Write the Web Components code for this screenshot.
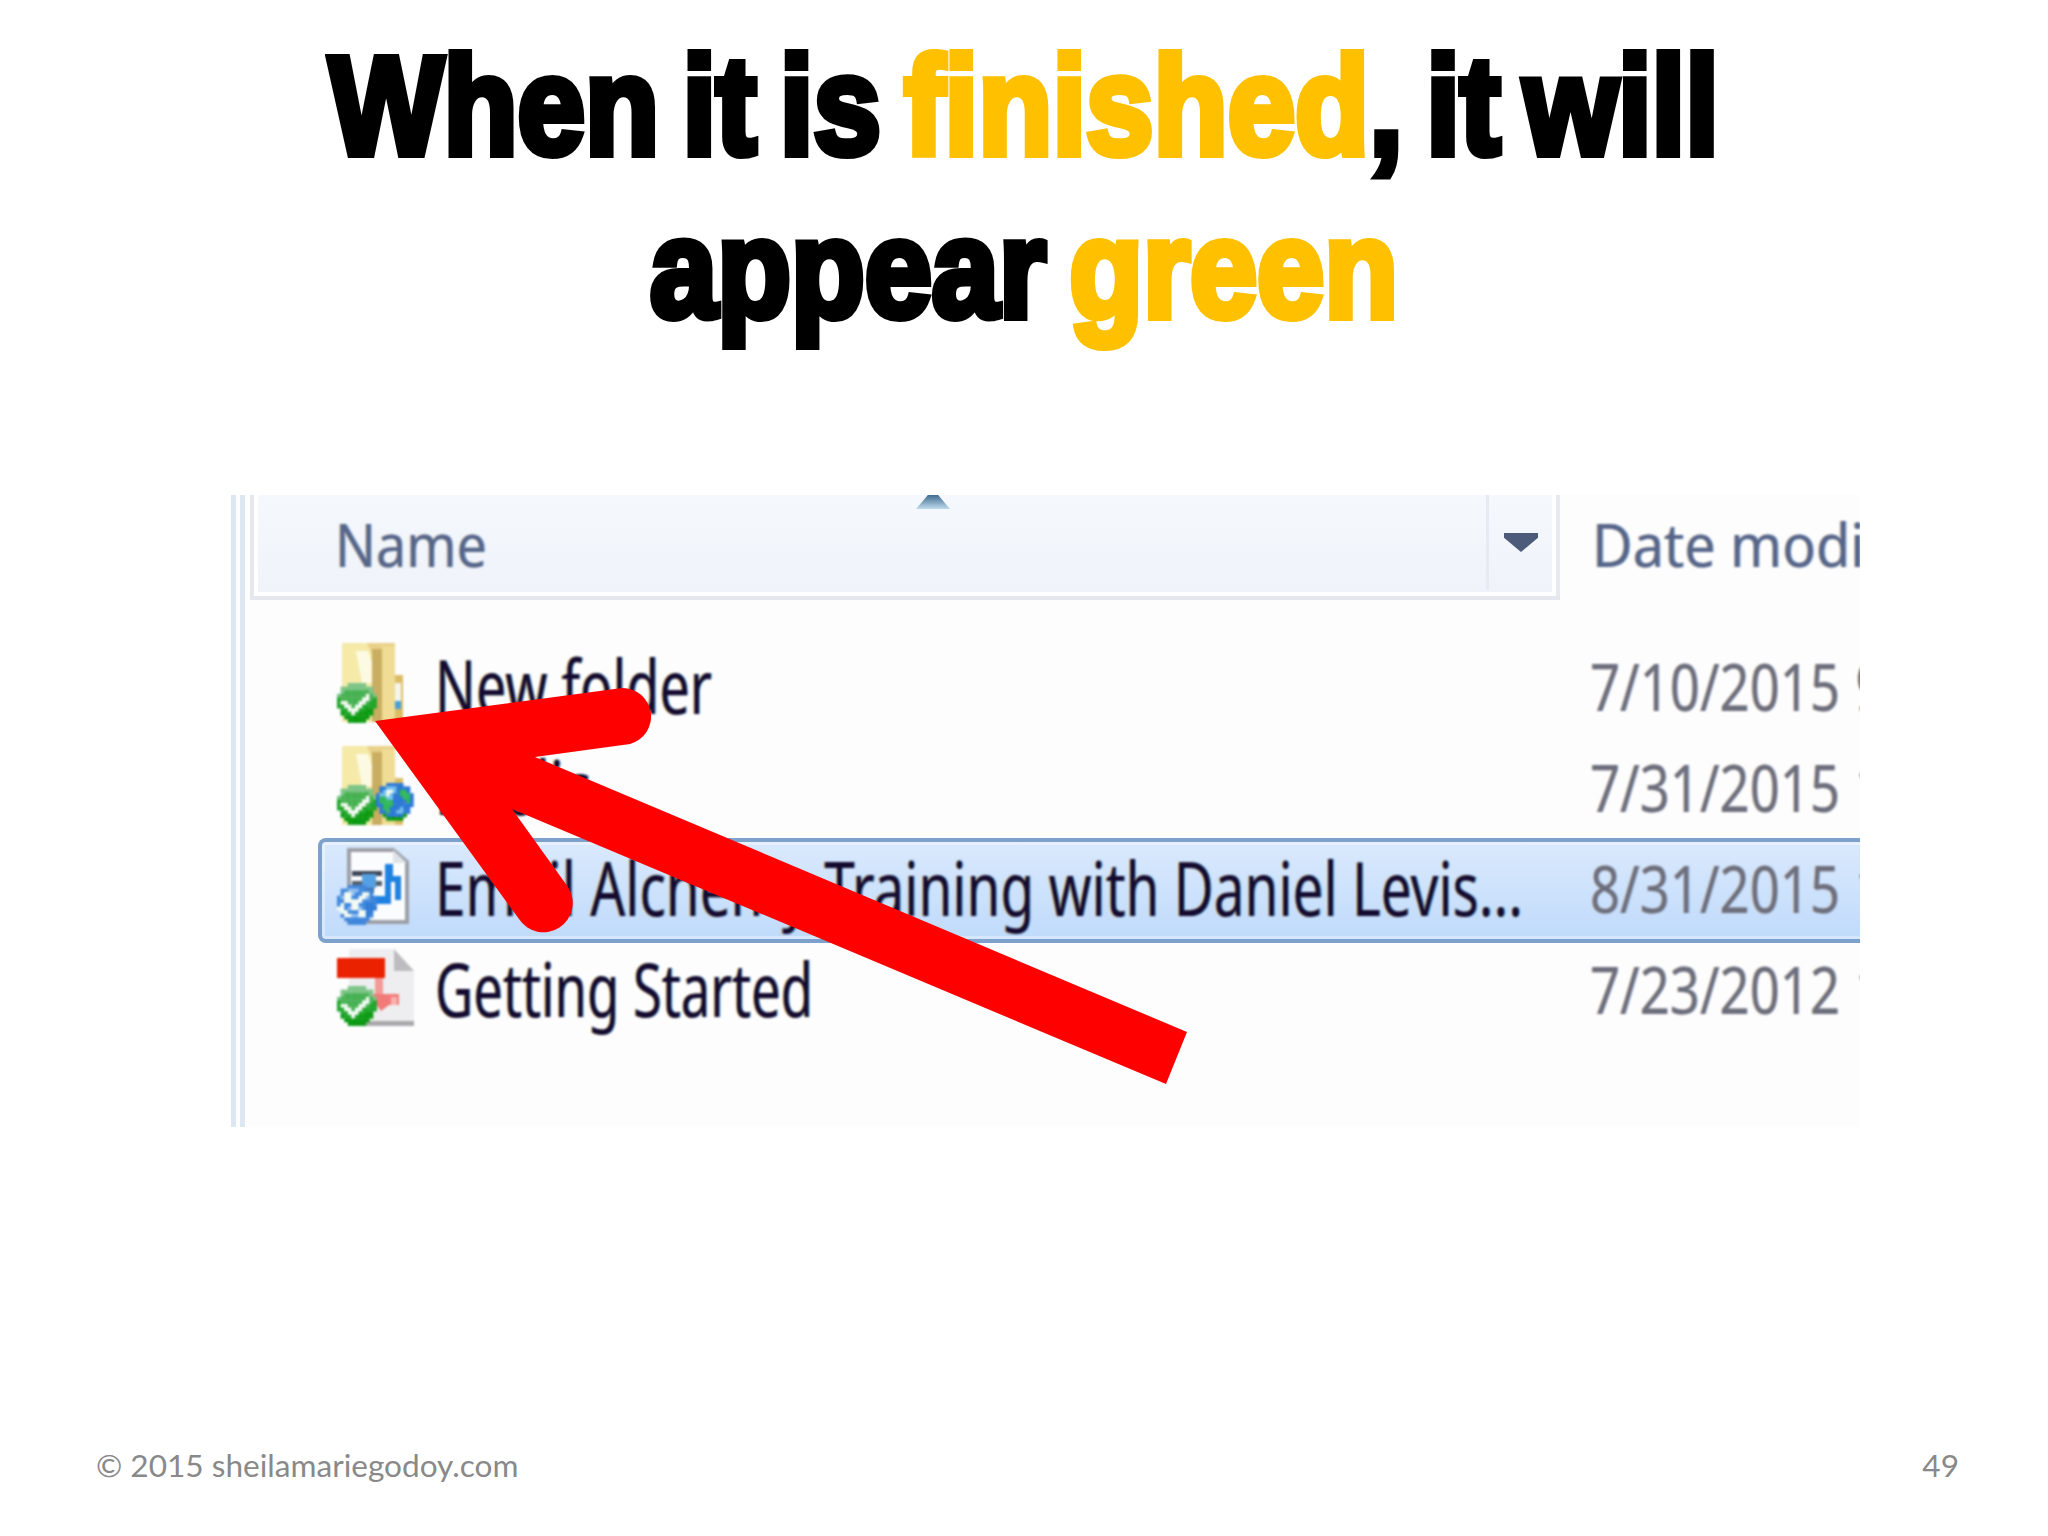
<!DOCTYPE html>
<html lang="en"><head><meta charset="utf-8"><title>Slide 49</title>
<style>html,body{margin:0;padding:0;background:#fff}</style></head>
<body>
<slide-page>
  <slide-title slot="title">
    <fit-text w="1390"><span>When it is <b>finished</b>, it will</span></fit-text>
    <fit-text w="748"><span>appear <b>green</b></span></fit-text>
  </slide-title>
  <explorer-panel slot="main">
    <column-head slot="head">
      <fit-text slot="name" w="152">Name</fit-text>
      <fit-text slot="date" w="372">Date modified</fit-text>
    </column-head>
    <file-row icon="folder"><fit-text slot="name" w="277">New folder</fit-text><fit-text slot="date" w="250">7/10/2015</fit-text><fit-text slot="time" w="24">9</fit-text></file-row>
    <file-row icon="shared"><fit-text slot="name" w="155">Public</fit-text><fit-text slot="date" w="250">7/31/2015</fit-text><fit-text slot="time" w="24">1</fit-text></file-row>
    <file-row icon="doc" selected><fit-text slot="name" w="1088">Email Alchemy Training with Daniel Levis...</fit-text><fit-text slot="date" w="250">8/31/2015</fit-text><fit-text slot="time" w="24">1</fit-text></file-row>
    <file-row icon="pdf"><fit-text slot="name" w="378">Getting Started</fit-text><fit-text slot="date" w="250">7/23/2012</fit-text><fit-text slot="time" w="24">1</fit-text></file-row>
    <red-arrow slot="overlay"></red-arrow>
  </explorer-panel>
  <slide-footer slot="footer"><span>© 2015 sheilamariegodoy.com</span><span slot="num">49</span></slide-footer>
</slide-page>
<script>
const sh=(el,html)=>{el.attachShadow({mode:'open'}).innerHTML=html};
customElements.define('slide-page',class extends HTMLElement{connectedCallback(){sh(this,`<style>
:host{display:flex;flex-direction:column;width:2048px;height:1536px;background:#fff;overflow:hidden}
.main{margin:0 188px 0 231px}
.foot{margin-top:auto}
</style><slot name="title"></slot><div class="main"><slot name="main"></slot></div><div class="foot"><slot name="footer"></slot></div>`)}});
customElements.define('slide-title',class extends HTMLElement{connectedCallback(){sh(this,`<style>
:host{display:flex;flex-direction:column;align-items:center;height:495px;box-sizing:border-box;padding-top:24px;
font:700 140px/163px "Liberation Sans",Arimo,sans-serif;color:#000;-webkit-text-stroke:8px currentColor;word-spacing:-12px}
::slotted(fit-text){display:block}
</style><slot></slot>`);
const s=document.createElement('style');s.textContent='slide-title b{color:#ffc000;font-weight:inherit}';document.head.append(s)}});
customElements.define('explorer-panel',class extends HTMLElement{connectedCallback(){sh(this,`<style>
:host{display:flex;position:relative;height:632px;background:#fdfdfe;overflow:hidden}
.rail{flex:none;width:19px;box-sizing:border-box;display:flex;gap:4px;filter:blur(.6px)}
.rail i{display:block;width:5px;background:#dde7f2}
.body{flex:1;min-width:0;display:flex;flex-direction:column}
.list{padding-top:36px;display:flex;flex-direction:column}
</style><div class="rail"><i></i><i></i></div><div class="body"><slot name="head"></slot><div class="list"><slot></slot></div></div><slot name="overlay"></slot>`)}});
customElements.define('column-head',class extends HTMLElement{connectedCallback(){sh(this,`<style>
:host{display:flex;height:105px;font:60px/60px "Noto Sans",sans-serif;color:#56658a;flex:none}
.box{position:relative;flex:none;width:1310px;box-sizing:border-box;padding:19px 0 0 85px;
background:linear-gradient(#f5f8fd,#eff3f9);box-shadow:inset 0 -4px 0 #e5e7ee,inset -4px 0 0 #e7e9f0,inset 4px 0 0 #e5e7ee,inset 0 -8px 0 #fff,inset -8px 0 0 #fff,inset 8px 0 0 #fff;}
.sep{position:absolute;left:1236px;top:0;bottom:10px;width:3px;background:#e6eaf2}
.tri{position:absolute;left:1254px;top:38px;width:34px;height:19px;background:#4c5b7a;clip-path:polygon(0 0,100% 0,100% 25%,50% 100%,0 25%)}
.sort{position:absolute;left:666px;top:0;width:34px;height:14px;background:linear-gradient(#3f6c8e,#bfdbee);clip-path:polygon(35% 0,65% 0,100% 100%,0 100%)}
.date{padding:19px 0 0 32px;white-space:nowrap}
::slotted(*){text-shadow:-1px 0 rgba(230,160,70,.5),1px 0 rgba(60,150,240,.5);filter:blur(.9px)}
</style><div class="box"><slot name="name"></slot><i class="sort"></i><i class="sep"></i><i class="tri"></i></div><div class="date"><slot name="date"></slot></div>`)}});
const BADGE=["...lllll...",".lllllllll.",".lmmmmmmml.","lmmmmmmmWml","gmmmmmmWWmg","gWWmmmWWmgg","ggWWmWWgggg",".ggWWWggdd.",".dggWgdddd.","..ddddddd..","...ddddd..."];
const GLOBE=["...bbbbb...",".bbcccbbbb.",".bcWWcbnnb.","bccWcbbnnnb","bnnccbbbnnb","bnnnnbbbbnb","bbnnnbbbbbb",".bnnbbbcbb.",".bbnbbccbb.","..dbbbbbd..","...ddddd..."];
const DGLOBE=["...kkkkk...",".kkzzzkkkk.",".kWWzkkWWk.","kzWWkkWWzkk","kkWWWWWkkkk","kWkkWWkkbbk","WWkzWWzkbbb",".WWkkkWWbb.",".kWWzzWWbk.","..kkkkkkk..","...kkkkk..."];
const PAL={l:'#7cc487',m:'#45b152',g:'#1fa62a',d:'#0a9a12',W:'#f4fbf4',b:'#2a78d8',c:'#6fc0ee',n:'#2cb85a',k:'#3f87dc',z:'#8fbdf0'};
const px=(rows,x,y,s)=>rows.map((r,j)=>[...r].map((c,i)=>PAL[c]?`<rect x="${(x+i*s).toFixed(1)}" y="${(y+j*s).toFixed(1)}" width="${s+.3}" height="${s+.3}" fill="${PAL[c]}"/>`:'').join('')).join('');
const FOLDER=(y)=>`<path d="M7 ${y}H60V${y+32}H68V${y+79}H7Z" fill="#ead189"/><path d="M7 ${y}H32L38 ${y+14}V${y+79}H7Z" fill="#f5eaa8"/><path d="M21 ${y+8}H33L37 ${y+20}V${y+40}H27Z" fill="#fdfae4"/><path d="M37 ${y+6}H47V${y+79}H37Z" fill="#c9ad60"/><path d="M47 ${y+3}H60V${y+79}H47Z" fill="#f0dc94"/><path d="M60 ${y+32}H68V${y+79}H60Z" fill="#dcbd66"/>`;
const ICONS={
folder:FOLDER(7)+`<rect x="60" y="47" width="6" height="18" fill="#f4f6ee"/><rect x="60" y="65" width="6" height="8" fill="#4aa0d8"/>`+px(BADGE,2,47,3.6),
shared:FOLDER(9)+px(BADGE,2,48,3.6)+px(GLOBE,41,46,3.4),
doc:`<path d="M14 12H58L72 24V84H14Z" fill="#fbfcfe" stroke="#9c9fa6" stroke-width="4"/><path d="M58 12V25H72" fill="#dfe3e8"/><rect x="17" y="33" width="30" height="5" fill="#404858"/><rect x="17" y="43" width="30" height="5" fill="#55606e"/><rect x="27" y="36" width="14" height="14" fill="#55a0e4"/><rect x="29" y="50" width="10" height="5" fill="#3c4a5a"/><path d="M50 26H58V38H66V62H60V44H56V66H36V58H50Z" fill="#1f82e2"/>`+px(DGLOBE,2,47,3.6),
pdf:`<path d="M14 10H59L79 32V86H14Z" fill="#eeeef0"/><path d="M59 10L79 32H59Z" fill="#bdbdbf"/><rect x="14" y="82" width="65" height="5" fill="#a9a9ab"/><rect x="2" y="19" width="48" height="20" fill="#ea2200"/><rect x="40" y="39" width="8" height="18" fill="#f39a96"/><path d="M38 55H64V66H54L46 72L40 64Z" fill="#f27a78"/><rect x="56" y="58" width="6" height="8" fill="#f9b2ae"/>`+px(BADGE,2,47,3.6)};
customElements.define('file-row',class extends HTMLElement{connectedCallback(){const sel=this.hasAttribute('selected');sh(this,`<style>
:host{display:block;height:${sel?105:101}px;margin:0 -10px ${sel?-4:0}px 68px;flex:none}
.r{box-sizing:border-box;height:100%;display:grid;grid-template-columns:100px 1155px 1fr;padding-left:17px;position:relative;
font:74px/74px "Noto Sans",sans-serif;color:#140a30;
${sel?'background:linear-gradient(#dbeafd,#bfdafb);border-radius:8px 0 0 8px;box-shadow:inset 0 0 0 4px #7da1cb,inset 0 0 0 7px rgba(255,255,255,.35);':''}}
svg{display:block;width:90px;height:90px;filter:blur(1.3px)}
.n,.d{padding-top:13px;filter:blur(.9px)}
.n{text-shadow:-1.5px 0 rgba(245,190,70,.75),1.5px 0 rgba(50,170,245,.75)}
.d{color:#6d6e7c;font-size:65px;display:flex;gap:16px;text-shadow:-1px 0 rgba(230,170,90,.45),1px 0 rgba(90,150,230,.45)}
</style><div class="r"><svg viewBox="0 0 90 90">${ICONS[this.getAttribute('icon')]}</svg><div class="n"><slot name="name"></slot></div><div class="d"><slot name="date"></slot><slot name="time"></slot></div></div>`)}});
customElements.define('red-arrow',class extends HTMLElement{connectedCallback(){sh(this,`<style>
:host{position:absolute;left:0;top:0;width:1629px;height:632px;pointer-events:none}
svg{display:block;width:100%;height:100%}
</style><svg viewBox="231 495 1629 632"><path fill="#ff0000" d="M375 721L622 688A28.5 28.5 0 0 1 630 744L535 757L1187 1032L1166 1084L512 809L568 887A29 29 0 0 1 519 919Z"/></svg>`)}});
customElements.define('slide-footer',class extends HTMLElement{connectedCallback(){sh(this,`<style>
:host{display:flex;justify-content:space-between;padding:0 89px 53px 96px;font:31.6px/36px Lato,"Liberation Sans",sans-serif;color:#898989}
</style><slot></slot><slot name="num"></slot>`)}});
customElements.define('fit-text',class extends HTMLElement{connectedCallback(){const w=+this.getAttribute('w');sh(this,`<style>
:host{display:inline-block;width:${w}px;vertical-align:baseline}
span{display:inline-block;white-space:nowrap;transform-origin:0 50%}
</style><span><slot></slot></span>`);
const s=this.shadowRoot.querySelector('span');const n=s.getBoundingClientRect().width;s.style.transform=`scaleX(${w/n})`}});
</script>
</body></html>
